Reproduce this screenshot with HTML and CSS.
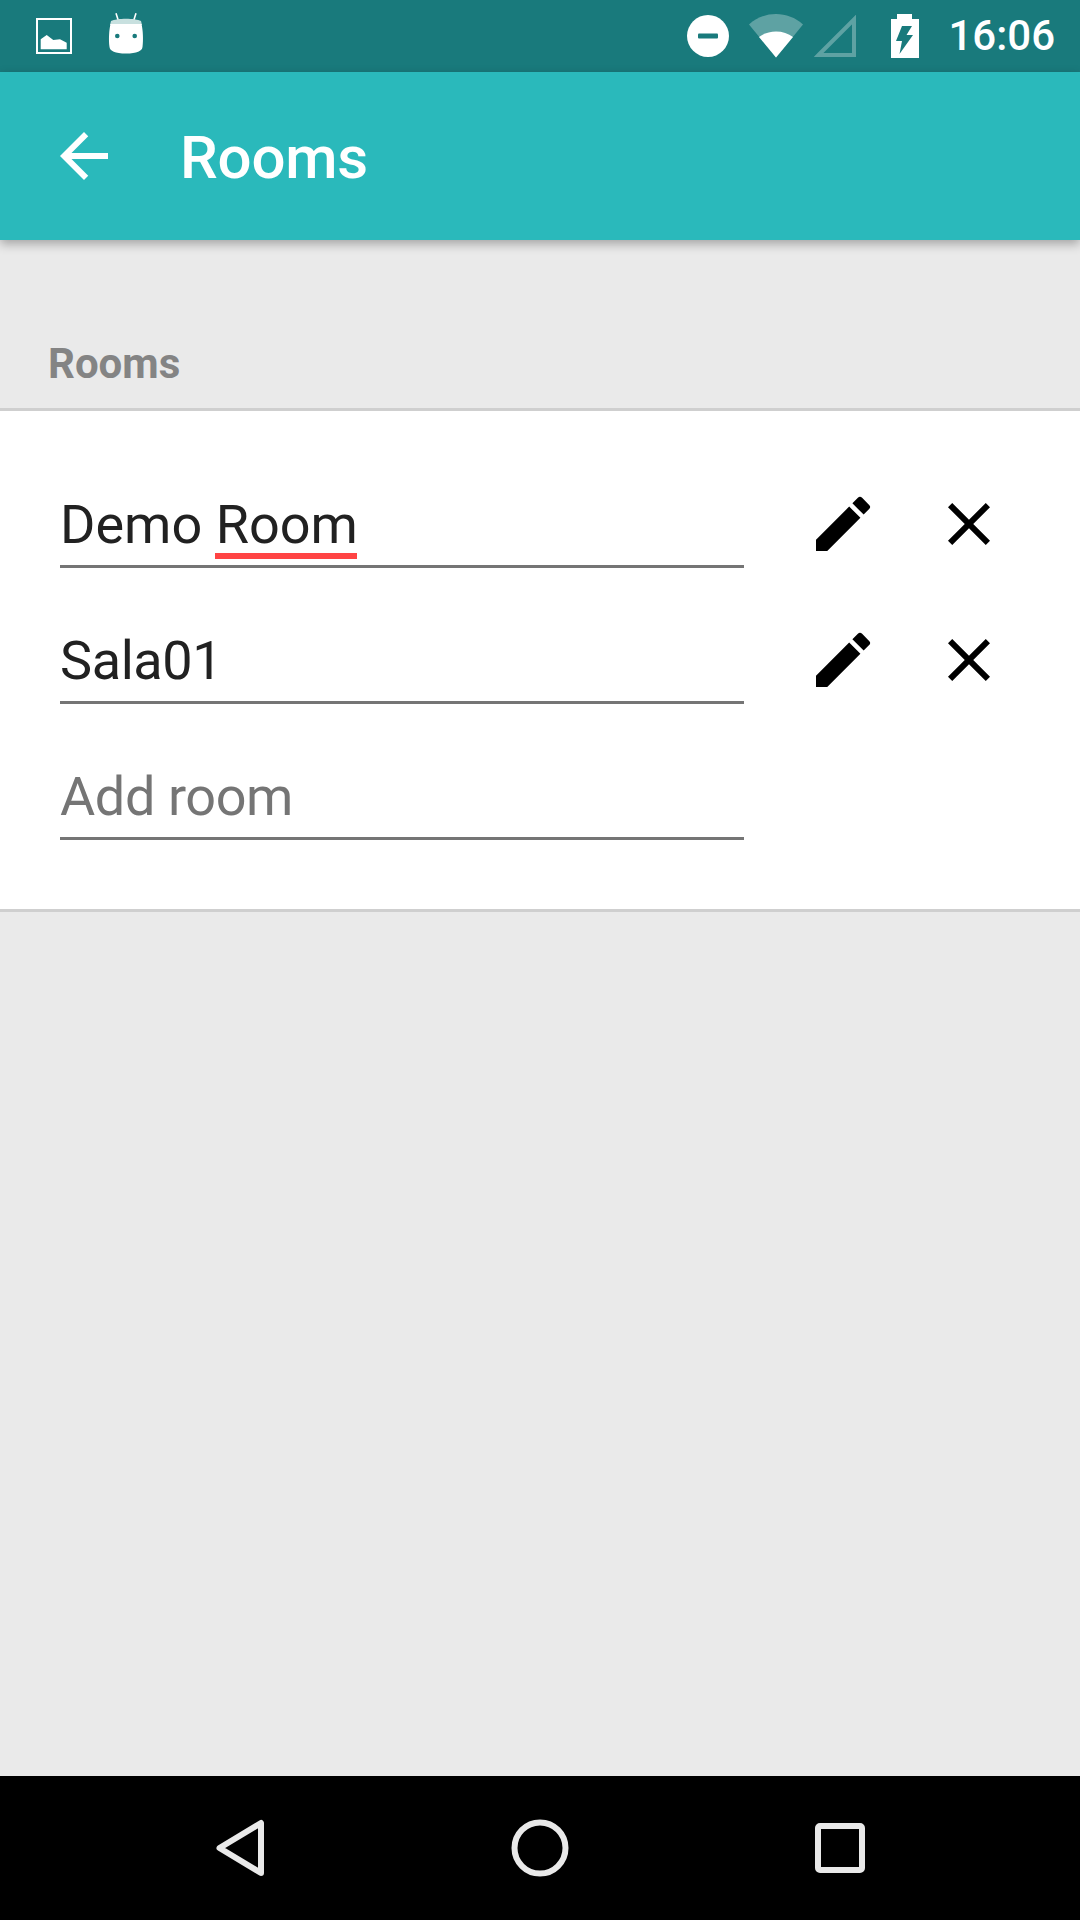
FILE: index.html
```html
<!DOCTYPE html>
<html lang="en">
<head>
<meta charset="UTF-8">
<meta name="viewport" content="width=device-width, initial-scale=1.0">
<title>Rooms</title>
<link rel="stylesheet" href="styles.css">
</head>
<body>
    <div class="status-bar">
        <div class="status-left">
            <svg class="ic-picture" width="36" height="36" viewBox="0 0 36 36">
                <rect x="1" y="1" width="34" height="34" fill="none" stroke="#fff" stroke-width="2"/>
                <path d="M4.7 31.3V21.3L10.7 17L17.3 22L24 21.3L30.7 24.7V31.3Z" fill="#fff"/>
            </svg>
            <svg class="ic-android" width="36" height="42" viewBox="0 0 36 42">
                <path d="M8 1.3L10.7 9.7M28 1.3L25.3 9.7" stroke="#fff" stroke-width="1.6" fill="none"/>
                <path d="M3 9C9 6 27 6 33 9L34 13H2Z" fill="#c8e0df"/>
                <path d="M2.5 12H33.5C35 18 35.5 28 34.5 35C34 39 29 41.5 18 41.5C7 41.5 2 39 1.5 35C0.5 28 1 18 2.5 12Z" fill="#fff"/>
                <circle cx="9.3" cy="24" r="2.3" fill="#197a7c"/>
                <circle cx="26.7" cy="24" r="2.3" fill="#197a7c"/>
            </svg>
        </div>
        <div class="status-right">
            <svg class="ic-dnd" width="42" height="42" viewBox="0 0 42 42">
                <circle cx="21" cy="21" r="21" fill="#fff"/>
                <rect x="11" y="18.500" width="20" height="5" rx="1" fill="#197a7c"/>
            </svg>
            <svg class="ic-wifi" width="54" height="44" viewBox="0 0 54 44">
                <path d="M0 10.500C15 -3.500 39 -3.500 54 10.500L27 43.500Z" fill="#fff" fill-opacity="0.3"/>
                <path d="M10 23C19 15.500 35 15.500 44 23L27 43.500Z" fill="#fff"/>
            </svg>
            <svg class="ic-signal" width="42" height="42" viewBox="0 0 42 42">
                <path d="M4.500 40L40 4.500V40Z" fill="none" stroke="#fff" stroke-opacity="0.3" stroke-width="4"/>
            </svg>
            <svg class="ic-battery" width="30" height="44" viewBox="0 0 30 44">
                <path fill-rule="evenodd" fill="#fff" d="M7 0H22V5H29V44H1V5H7ZM12 12L6 27H12L9.500 40L23 21H16.500L22 12Z"/>
            </svg>
            <span class="clock">16:06</span>
        </div>
    </div>

    <div class="toolbar">
        <svg class="ic-back" width="72" height="72" viewBox="0 0 24 24">
            <path fill="#fff" d="M20 11H7.830l5.590-5.590L12 4l-8 8 8 8 1.410-1.410L7.830 13H20v-2z"/>
        </svg>
        <h1 class="title">Rooms</h1>
    </div>

    <div class="content">
        <div class="section-label">Rooms</div>
        <div class="card">
            <div class="row">
                <div class="field"><span class="value">Demo <span class="misspelled">Room</span></span></div>
                <div class="actions">
                    <svg width="72" height="72" viewBox="0 0 24 24"><path d="M3 17.250V21h3.750L17.810 9.940l-3.750-3.750L3 17.250zM20.710 7.040a1 1 0 0 0 0-1.410l-2.340-2.340a1 1 0 0 0-1.410 0l-1.830 1.830 3.750 3.750 1.830-1.830z"/></svg>
                    <svg width="72" height="72" viewBox="0 0 24 24"><path d="M19 6.410L17.590 5 12 10.590 6.410 5 5 6.410 10.590 12 5 17.590 6.410 19 12 13.410 17.590 19 19 17.590 13.410 12z"/></svg>
                </div>
            </div>
            <div class="row">
                <div class="field"><span class="value tight">Sala01</span></div>
                <div class="actions">
                    <svg width="72" height="72" viewBox="0 0 24 24"><path d="M3 17.250V21h3.750L17.810 9.940l-3.750-3.750L3 17.250zM20.710 7.040a1 1 0 0 0 0-1.410l-2.340-2.340a1 1 0 0 0-1.410 0l-1.830 1.830 3.750 3.750 1.830-1.830z"/></svg>
                    <svg width="72" height="72" viewBox="0 0 24 24"><path d="M19 6.410L17.590 5 12 10.590 6.410 5 5 6.410 10.590 12 5 17.590 6.410 19 12 13.410 17.590 19 19 17.590 13.410 12z"/></svg>
                </div>
            </div>
            <div class="row">
                <div class="field"><span class="value tight placeholder">Add room</span></div>
            </div>
        </div>
    </div>

    <div class="nav-bar">
        <svg width="72" height="72" viewBox="0 0 72 72">
            <path d="M15.500 36L57 11V61Z" class="nav-shape"/>
        </svg>
        <svg width="72" height="72" viewBox="0 0 72 72">
            <circle cx="36" cy="36" r="25.500" class="nav-shape"/>
        </svg>
        <svg width="72" height="72" viewBox="0 0 72 72">
            <rect x="14" y="14" width="44" height="44" rx="2" class="nav-shape"/>
        </svg>
    </div>
</body>
</html>
```

FILE: styles.css
```css
* {
    box-sizing: border-box;
}
body {
    margin: 0;
    width: 1080px;
    height: 1920px;
    display: flex;
    flex-direction: column;
    font-family: Roboto, "Noto Sans", sans-serif;
    background-color: #eaeaea;
    overflow: hidden;
}
svg {
    display: block;
    flex: none;
}

/* status bar */
.status-bar {
    height: 72px;
    background-color: #197a7c;
    display: flex;
    justify-content: space-between;
    align-items: center;
    color: #fff;
}
.status-left {
    display: flex;
    align-items: flex-start;
    padding-left: 36px;
    margin-bottom: 6px;
    gap: 36px;
}
.ic-picture {
    margin-top: 6px;
}
.status-right {
    display: flex;
    align-items: center;
    padding-right: 25px;
}
.ic-wifi {
    margin-left: 20px;
}
.ic-signal {
    margin-left: 11px;
}
.ic-battery {
    margin-left: 34px;
}
.clock {
    margin-left: 28px;
    font-size: 42px;
    font-weight: 500;
    line-height: 48px;
}

/* toolbar */
.toolbar {
    position: relative;
    height: 168px;
    background-color: #2ab9bb;
    display: flex;
    align-items: center;
    padding-left: 48px;
    box-shadow: 0 4px 10px rgba(0, 0, 0, 0.3);
}
.title {
    margin: 2px 0 0 60px;
    font-size: 60px;
    font-weight: 500;
    letter-spacing: -0.2px;
    color: #fff;
}

/* list */
.content {
    flex: 1;
}
.section-label {
    padding: 99px 0 0 48px;
    height: 168px;
    font-size: 42px;
    line-height: 50px;
    font-weight: 700;
    color: #848484;
}
.card {
    height: 504px;
    padding-top: 21px;
    background-color: #fff;
    border-top: 3px solid #cfcfcf;
    border-bottom: 3px solid #cfcfcf;
}
.row {
    height: 136px;
    display: flex;
    align-items: flex-end;
    padding-left: 60px;
}
.field {
    width: 684px;
    padding-bottom: 8px;
    border-bottom: 3px solid #757575;
    font-size: 54px;
    line-height: 64px;
    color: #212121;
}
.tight {
    letter-spacing: -0.4px;
}
.placeholder {
    color: #757575;
}
.misspelled {
    position: relative;
}
.misspelled::after {
    content: "";
    position: absolute;
    left: -1px;
    right: 1px;
    bottom: -3px;
    height: 6px;
    background-color: #ff4444;
}
.actions {
    display: flex;
    gap: 54px;
    margin: 0 0 8px 63px;
}

/* nav bar */
.nav-bar {
    height: 144px;
    background-color: #000;
    display: flex;
    justify-content: center;
    align-items: center;
    gap: 228px;
}
.nav-shape {
    fill: none;
    stroke: #e9e9e9;
    stroke-width: 6;
    stroke-linejoin: round;
}
```
